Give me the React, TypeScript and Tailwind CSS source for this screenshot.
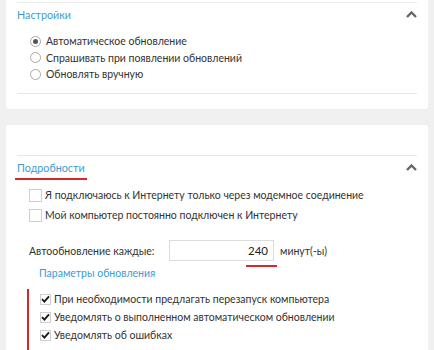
import type { ReactNode } from "react";

const font = { fontFamily: 'Lato, "Open Sans", "Noto Sans", sans-serif' };

function Chevron() {
  return (
    <svg width="11" height="7" viewBox="0 0 11 7" className="text-[#666]">
      <path d="M1 6 L5.5 1.5 L10 6" fill="none" stroke="currentColor" strokeWidth="2.4" />
    </svg>
  );
}

function Radio({ checked, children }: { checked?: boolean; children: ReactNode }) {
  return (
    <div className="flex h-[16.5px] items-center gap-[5px]">
      <span className="flex h-[11px] w-[11px] items-center justify-center rounded-full border border-[#a8a8a8] bg-white">
        {checked && <span className="h-[5px] w-[5px] rounded-full bg-[#555]" />}
      </span>
      <span>{children}</span>
    </div>
  );
}

function Check({ checked, children, size = 13, h = 20 }: { checked?: boolean; children: ReactNode; size?: number; h?: number }) {
  return (
    <div className="flex items-center gap-[3px]" style={{ height: h }}>
      <span
        className="flex shrink-0 items-center justify-center border border-[#cfcfcf] bg-white"
        style={{ width: size, height: size }}
      >
        {checked && (
          <svg width="9" height="8" viewBox="0 0 9 8">
            <path d="M1 4.2 L3.4 6.6 L8 1.4" fill="none" stroke="#1a1a1a" strokeWidth="1.9" />
          </svg>
        )}
      </span>
      <span>{children}</span>
    </div>
  );
}

export default function App() {
  return (
    <div className="h-[350px] overflow-hidden bg-[#f0f0f0] px-[6px] text-[10.5px] leading-[14px] text-[#333]" style={font}>
      {/* Настройки */}
      <div className="h-[109px] rounded-b-[3px] bg-white px-[11px] pt-[2px]">
        <div className="border-t border-[#ececec]">
          <div className="flex h-[22px] items-center justify-between pt-[1px]">
            <span className="text-[10.75px] text-[#3d9bd6]">Настройки</span>
            <Chevron />
          </div>
          <div className="pl-[13px] pt-[8px]">
            <Radio checked>Автоматическое обновление</Radio>
            <Radio>Спрашивать при появлении обновлений</Radio>
            <Radio>Обновлять вручную</Radio>
          </div>
          <div className="mt-[10px] border-t border-[#e6e6e6]" />
        </div>
      </div>

      {/* Подробности */}
      <div className="mt-[16px] rounded-t-[3px] bg-white px-[11px] pt-[30px]">
        <div className="border-t border-[#e6e6e6]">
          <div className="flex h-[22px] items-center justify-between pt-[1px]">
            <span className="relative text-[10.75px] text-[#3d9bd6]">
              Подробности
              <span className="absolute left-[-2px] right-[-2px] top-[17px] h-[2px] bg-[#d9262a]" />
            </span>
            <Chevron />
          </div>
          <div className="flex flex-col pl-[12px] pt-[7px]">
            <Check>Я подключаюсь к Интернету только через модемное соединение</Check>
            <Check>Мой компьютер постоянно подключен к Интернету</Check>
          </div>
          <div className="mt-[15px] flex items-center pl-[12px]">
            <span className="w-[140px]">Автообновление каждые:</span>
            <span className="relative flex h-[21px] w-[105px] items-center justify-end border border-[#dcdcdc] pr-[5px] text-[11.5px] text-[#222]">
              240
              <span className="absolute right-[-4px] top-[24px] h-[2px] w-[31px] bg-[#d9262a]" />
            </span>
            <span className="pl-[6px]">минут(-ы)</span>
          </div>
          <div className="mt-[4px] flex h-[16px] items-center pl-[22px] text-[#3d9bd6]">Параметры обновления</div>
          <div className="ml-[10px] mt-[8px] flex flex-col border-l-2 border-[#d9262a] pb-[20px] pl-[11px] pt-[1px]">
            <Check checked size={11} h={18}>При необходимости предлагать перезапуск компьютера</Check>
            <Check checked size={11} h={18}>Уведомлять о выполненном автоматическом обновлении</Check>
            <Check checked size={11} h={18}>Уведомлять об ошибках</Check>
          </div>
        </div>
      </div>
    </div>
  );
}
